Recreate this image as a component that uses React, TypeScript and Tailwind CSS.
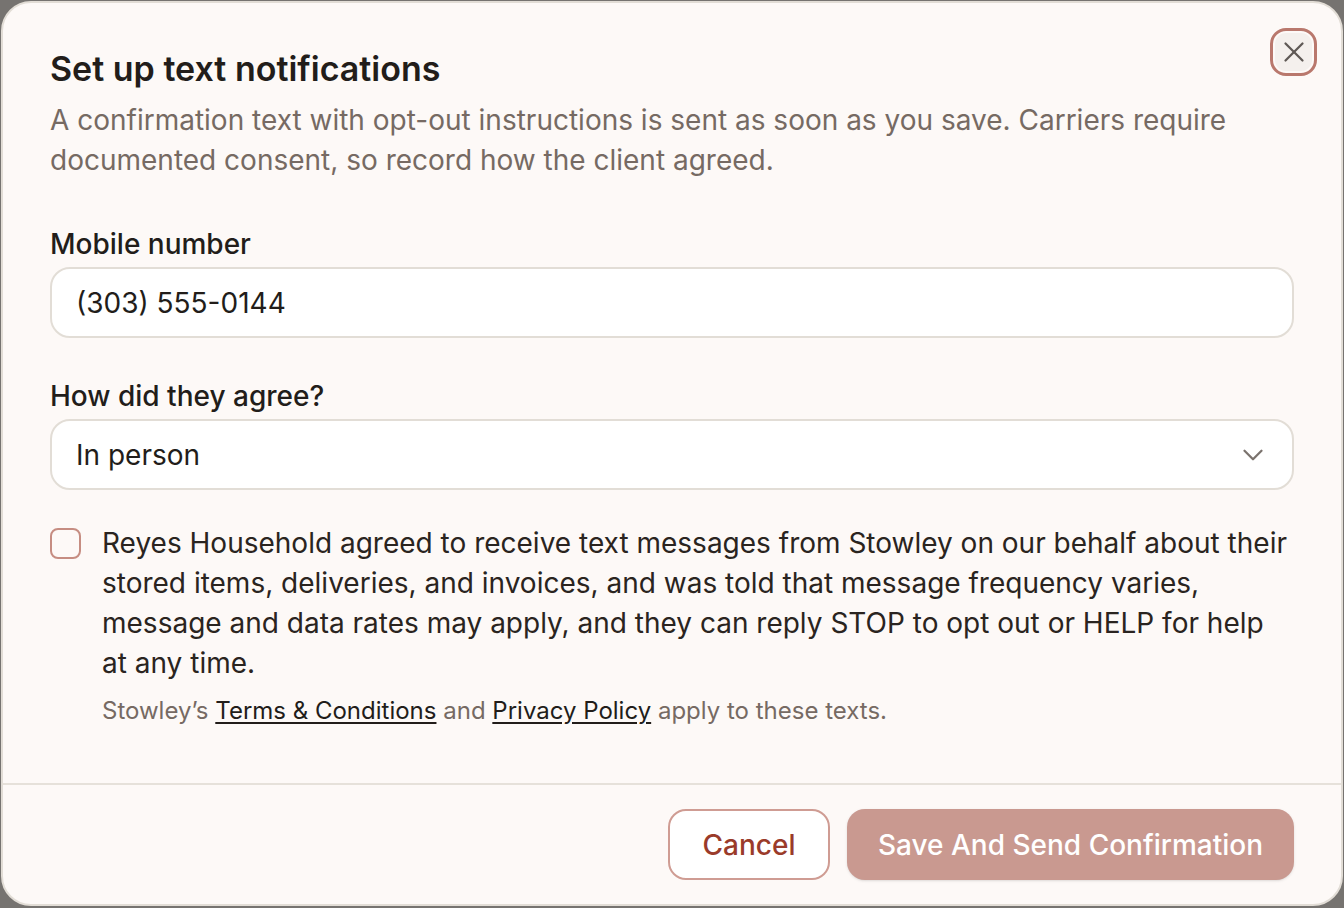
import React from 'react';
import { X, ChevronDown } from 'lucide-react';

export default function App() {
  return (
    <div className="h-[908px] w-full bg-[#767370] p-px" style={{ fontFamily: 'Inter, "Noto Sans", sans-serif' }}>
      <div className="flex h-[905px] flex-col rounded-[30px] border-2 border-[#e2ddd6] bg-[#fdf9f7]">
        <div className="relative flex-1 px-[47px] pt-[42px]">
          <button className="absolute right-[24px] top-[25px] flex h-[48px] w-[47px] items-center justify-center rounded-[16px] border-[3px] border-[#b9786d] bg-[#f4f0ed] shadow-[inset_0_0_0_2px_#fdf9f7]">
            <X className="h-[34px] w-[34px] text-[#5f5955]" strokeWidth={1.6} />
          </button>
          <h2 className="text-[34px] font-semibold leading-[48px] text-[#221d1a]">Set up text notifications</h2>
          <p className="mt-[7px] pr-[60px] text-[28px] leading-[40px] text-[#766a63]">
            A confirmation text with opt-out instructions is sent as soon as you save. Carriers require documented consent, so record how the client agreed.
          </p>

          <label className="mt-[44px] block text-[28px] font-medium leading-[40px] text-[#221d1a]">Mobile number</label>
          <div className="mt-[3px] flex h-[71px] items-center rounded-[20px] border-2 border-[#e2ddd6] bg-white px-[24px] text-[28px] text-[#221d1a]">
            (303) 555-0144
          </div>

          <label className="mt-[38px] block text-[28px] font-medium leading-[40px] text-[#221d1a]">How did they agree?</label>
          <div className="mt-[3px] flex h-[71px] items-center justify-between rounded-[20px] border-2 border-[#e2ddd6] bg-white pl-[24px] pr-[22px] text-[28px] text-[#221d1a]">
            <span>In person</span>
            <ChevronDown className="h-[34px] w-[34px] text-[#7b736e]" strokeWidth={1.6} />
          </div>

          <div className="mt-[33px] flex gap-[21px]">
            <div className="mt-[5px] h-[31px] w-[31px] shrink-0 rounded-[8px] border-2 border-[#c68d82] bg-[#fdf9f7]" />
            <div>
              <p className="text-[28px] leading-[40px] text-[#2a2420]">
                Reyes Household agreed to receive text messages from Stowley on our behalf about their stored items, deliveries, and invoices, and was told that message frequency varies, message and data rates may apply, and they can reply STOP to opt out or HELP for help at any time.
              </p>
              <p className="mt-[12px] text-[24px] leading-[32px] text-[#766a63]">
                Stowley’s <a className="text-[#221d1a] underline underline-offset-[3px]">Terms &amp; Conditions</a> and{' '}
                <a className="text-[#221d1a] underline underline-offset-[3px]">Privacy Policy</a> apply to these texts.
              </p>
            </div>
          </div>
        </div>

        <div className="flex h-[121px] items-center justify-end gap-[17px] border-t-2 border-[#e6e1da] px-[47px]">
          <button className="h-[71px] w-[162px] rounded-[18px] border-2 border-[#cf9c93] bg-white text-[28px] font-medium text-[#9a3b2a]">
            Cancel
          </button>
          <button className="h-[71px] w-[447px] rounded-[18px] bg-[#c99990] text-[28px] font-medium text-white shadow-sm">
            Save And Send Confirmation
          </button>
        </div>
      </div>
    </div>
  );
}
